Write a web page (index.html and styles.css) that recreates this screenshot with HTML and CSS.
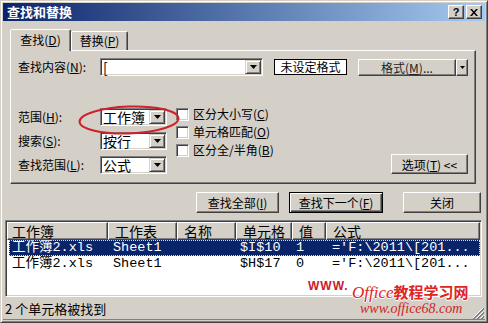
FILE: index.html
```html
<!DOCTYPE html>
<html lang="zh-CN">
<head>
<meta charset="utf-8">
<title>查找和替换</title>
<link rel="stylesheet" href="styles.css">
</head>
<body>
<div class="window">
  <div class="titlebar">
    <span class="title">查找和替换</span>
    <div class="tbtns">
      <span class="tbtn help">?</span>
      <span class="tbtn"><svg width="8" height="7" viewBox="0 0 8 7"><path d="M0 0h2l2 2.5L6 0h2L5 3.5 8 7H6L4 4.5 2 7H0l3-3.5z" fill="#000"/></svg></span>
    </div>
  </div>
  <div class="body">
    <div class="tabs">
      <div class="tab active t1">查找(<u>D</u>)</div>
      <div class="tab t2">替换(<u>P</u>)</div>
    </div>
    <div class="panel">
      <div class="row1">
        <span class="label">查找内容(<u>N</u>):</span>
        <div class="combo wide"><span class="val">[</span><span class="drop"><svg width="7" height="4" viewBox="0 0 7 4"><path d="M0 0h7L3.5 4z" fill="#000"/></svg></span></div>
        <div class="fmtbox">未设定格式</div>
        <div class="splitbtn"><span class="main">格式(<u>M</u>)...</span><span class="arr"><svg width="5" height="3" viewBox="0 0 5 3"><path d="M0 0h5L2.5 3z" fill="#000"/></svg></span></div>
      </div>
      <div class="opts">
        <div class="grid">
          <span class="label">范围(<u>H</u>):</span>
          <div class="combo"><span class="val">工作簿</span><span class="drop"><svg width="7" height="4" viewBox="0 0 7 4"><path d="M0 0h7L3.5 4z" fill="#000"/></svg></span></div>
          <span class="label">搜索(<u>S</u>):</span>
          <div class="combo"><span class="val">按行</span><span class="drop"><svg width="7" height="4" viewBox="0 0 7 4"><path d="M0 0h7L3.5 4z" fill="#000"/></svg></span></div>
          <span class="label">查找范围(<u>L</u>):</span>
          <div class="combo"><span class="val">公式</span><span class="drop"><svg width="7" height="4" viewBox="0 0 7 4"><path d="M0 0h7L3.5 4z" fill="#000"/></svg></span></div>
        </div>
        <div class="checks">
          <div class="chk"><span class="box"></span>区分大小写(<u>C</u>)</div>
          <div class="chk"><span class="box"></span>单元格匹配(<u>O</u>)</div>
          <div class="chk"><span class="box"></span>区分全/半角(<u>B</u>)</div>
        </div>
        <div class="btn optbtn">选项(<u>T</u>) &lt;&lt;</div>
      </div>
    </div>
    <div class="actions">
      <div class="btn b1">查找全部(<u>I</u>)</div>
      <div class="btn b2 default">查找下一个(<u>F</u>)</div>
      <div class="btn b3">关闭</div>
    </div>
    <div class="list">
      <div class="lhead">
        <span class="hc c1">工作簿</span>
        <span class="hc c2">工作表</span>
        <span class="hc c3">名称</span>
        <span class="hc c4">单元格</span>
        <span class="hc c5">值</span>
        <span class="hc c6">公式</span>
      </div>
      <div class="lrow sel">
        <span class="cell c1">工作簿2.xls</span>
        <span class="cell c2">Sheet1</span>
        <span class="cell c3"></span>
        <span class="cell c4">$I$10</span>
        <span class="cell c5">1</span>
        <span class="cell c6">='F:\2011\[201...</span>
      </div>
      <div class="lrow">
        <span class="cell c1">工作簿2.xls</span>
        <span class="cell c2">Sheet1</span>
        <span class="cell c3"></span>
        <span class="cell c4">$H$17</span>
        <span class="cell c5">0</span>
        <span class="cell c6">='F:\2011\[201...</span>
      </div>
    </div>
  </div>
  <div class="status">2 个单元格被找到</div>

  <svg class="ring" width="104" height="32" viewBox="0 0 104 32"><ellipse cx="52" cy="16" rx="49.5" ry="13.5" fill="none" stroke="#D0202A" stroke-width="2" transform="rotate(-2 52 16)"/></svg>

  <div class="wm">
    <span class="wm-www">WWW.</span>
    <span class="wm-brand"><i>Office</i>教程学习网</span>
    <span class="wm-url">www.office68.com</span>
  </div>
  <svg class="grip" width="12" height="12" viewBox="0 0 12 12">
    <path d="M11 1L1 11M11 5L5 11M11 9L9 11" stroke="#fff" stroke-width="1"/>
    <path d="M12 1L1 12M12 2L2 12M12 5L5 12M12 6L6 12M12 9L9 12M12 10L10 12" stroke="#808080" stroke-width="1"/>
  </svg>
</div>
</body>
</html>
```

FILE: styles.css
```css
* { box-sizing: border-box; }
html, body { margin: 0; padding: 0; }
body {
  width: 488px; height: 323px; overflow: hidden;
  background: #D4D0C8;
  font-family: "Noto Sans CJK SC", "DejaVu Sans", sans-serif;
  font-size: 12px; color: #000;
}
u { text-decoration: underline; text-underline-offset: 1px; }

.window {
  position: relative;
  width: 488px; height: 323px;
  background: #D4D0C8;
  border: 1px solid; border-color: #D4D0C8 #404040 #404040 #D4D0C8;
  box-shadow: inset 1px 1px #fff, inset -1px -1px #808080;
  padding: 2px;
  display: flex; flex-direction: column;
}

.titlebar {
  height: 18px; flex: none;
  display: flex; align-items: center;
  background: linear-gradient(90deg, #0A246A, #A6CAF0);
  padding: 0 3px 0 4px;
}
.title { color: #fff; font-weight: bold; font-size: 13px; line-height: 18px; }
.tbtns { margin-left: auto; display: flex; gap: 2px; }
.tbtn {
  width: 16px; height: 14px;
  display: flex; align-items: center; justify-content: center;
  background: #D4D0C8;
  border: 1px solid; border-color: #fff #404040 #404040 #fff;
  box-shadow: inset -1px -1px #808080;
}
.tbtn.help { font-family: "Liberation Sans", sans-serif; font-weight: bold; font-size: 11px; line-height: 12px; }

.body {
  flex: 1; display: flex; flex-direction: column;
  padding: 8px 3px 0 2px;
}

.tabs { height: 21px; display: flex; align-items: flex-end; margin-left: 5px; flex: none; }
.tab {
  height: 19px; text-align: center; line-height: 18px;
  border: 1px solid; border-bottom: none;
  border-color: #fff #404040 transparent #fff;
  box-shadow: inset -1px 0 #808080;
  border-radius: 2px 2px 0 0;
  background: #D4D0C8;
}
.tab.active { height: 22px; margin-bottom: -1px; position: relative; z-index: 1; line-height: 20px; }
.t1 { width: 61px; }
.t2 { width: 57px; }

.panel {
  height: 134px; flex: none;
  margin: 0 6px 0 5px;
  border: 1px solid; border-color: #fff #404040 #404040 #fff;
  box-shadow: inset -1px -1px #808080;
  padding: 7px 7px 0 7px;
}
.row1 { display: flex; align-items: center; height: 18px; }
.label { width: 82px; flex: none; white-space: nowrap; line-height: 18px; }

.combo {
  height: 18px; display: flex;
  background: #fff;
  border: 1px solid; border-color: #808080 #fff #fff #808080;
  box-shadow: inset 1px 1px #404040, inset -1px -1px #D4D0C8;
  padding: 1px;
}
.combo .val { flex: 1; min-width: 0; font-size: 14px; line-height: 14px; padding-left: 1px; white-space: nowrap; }
.combo .drop {
  width: 16px; height: 14px; flex: none;
  display: flex; align-items: center; justify-content: center;
  background: #D4D0C8;
  border: 1px solid; border-color: #D4D0C8 #404040 #404040 #D4D0C8;
  box-shadow: inset 1px 1px #fff, inset -1px -1px #808080;
}
.combo.wide { width: 163px; }
.grid .combo { width: 67px; }

.fmtbox {
  margin-left: 11px; width: 73px; height: 16px;
  border: 1px solid #000; background: #fff;
  text-align: center; line-height: 14px;
}
.splitbtn {
  margin-left: 11px; width: 110px; height: 17px;
  display: flex;
}
.splitbtn .main, .splitbtn .arr {
  border: 1px solid; border-color: #fff #404040 #404040 #fff;
  box-shadow: inset -1px -1px #808080;
  display: flex; align-items: center; justify-content: center;
}
.splitbtn .main { flex: 1; line-height: 15px; color: #222; }
.splitbtn .arr { width: 12px; flex: none; }

.opts { margin-top: 32px; height: 66px; display: flex; }
.grid { display: grid; grid-template-columns: 82px 67px; grid-auto-rows: 18px; row-gap: 6px; }
.grid .label { display: flex; align-items: center; }
.checks { margin-left: 9px; margin-top: -3px; display: flex; flex-direction: column; }
.chk { height: 18px; display: flex; align-items: center; white-space: nowrap; line-height: 18px; }
.box {
  width: 13px; height: 13px; margin-right: 4px; flex: none;
  background: #fff;
  border: 1px solid; border-color: #808080 #fff #fff #808080;
  box-shadow: inset 1px 1px #404040, inset -1px -1px #D4D0C8;
}

.btn {
  height: 21px;
  display: flex; align-items: center; justify-content: center;
  border: 1px solid; border-color: #fff #404040 #404040 #fff;
  box-shadow: inset -1px -1px #808080;
  white-space: nowrap;
}
.optbtn { margin-left: auto; align-self: flex-end; width: 77px; height: 20px; }

.actions { margin-top: 8px; height: 21px; display: flex; justify-content: flex-end; flex: none; }
.b1 { width: 83px; margin-right: 10px; }
.b2 { width: 94px; margin-right: 20px; }
.b3 { width: 78px; margin-right: 1px; }
.btn.default {
  border: 1px solid #000;
  box-shadow: inset 1px 1px #fff, inset -1px -1px #404040, inset -2px -2px #808080;
}

.list {
  margin-top: 7px; height: 77px; flex: none;
  background: #fff;
  border: 1px solid; border-color: #808080 #fff #fff #808080;
  box-shadow: inset 1px 1px #404040, inset -1px -1px #D4D0C8;
  padding: 1px;
  display: flex; flex-direction: column;
  overflow: hidden;
}
.lhead { height: 18px; display: flex; flex: none; background: #D4D0C8; }
.hc {
  height: 18px; font-size: 14px; line-height: 16px;
  padding-left: 4px; white-space: nowrap; overflow: hidden;
  border: 1px solid; border-color: #fff #404040 #404040 #fff;
  box-shadow: inset -1px -1px #808080;
}
.c1 { width: 101px; flex: none; }
.c2 { width: 69px; flex: none; }
.c3 { width: 59px; flex: none; }
.c4 { width: 56px; flex: none; }
.c5 { width: 34px; flex: none; }
.c6 { flex: 1; }
.hc.c2, .hc.c3, .hc.c4, .hc.c5, .hc.c6 { padding-left: 6px; }

.lrow {
  height: 16px; display: flex; margin-left: 2px;
  font-family: "Liberation Mono", "Noto Sans CJK SC", monospace;
  font-size: 13.5px; line-height: 16px; white-space: nowrap;
}
.lrow .c1 { width: 99px; }
.cell { padding-left: 3px; overflow: hidden; }
.cell.c2 { padding-left: 5px; }
.cell.c4, .cell.c5 { padding-left: 4px; }
.cell.c6 { padding-left: 6px; }
.lrow.sel { background: #0A246A; color: #fff; outline: 1px dotted #d8d8d8; outline-offset: -1px; }

.status {
  height: 23px; flex: none;
  font-size: 13px; line-height: 23px;
  padding-left: 2px;
  border-bottom: 1px solid #808080;
}

.ring { position: absolute; left: 76px; top: 103px; }

.wm { position: absolute; left: 300px; top: 276px; width: 185px; height: 44px; pointer-events: none; }
.wm span { position: absolute; white-space: nowrap; }
.wm-www { left: 7px; top: 2px; font-family: "Liberation Sans", sans-serif; font-weight: bold; font-size: 12px; letter-spacing: 1px; color: #C8202A; }
.wm-brand {
  left: 51px; top: 6px; font-size: 15px; font-weight: bold; color: #E0241E; line-height: 18px;
  text-shadow: 1px 0 #fff, -1px 0 #fff, 0 1px #fff, 0 -1px #fff;
}
.wm-brand i { font-family: "Liberation Serif", serif; font-size: 17px; font-weight: normal; }
.wm-url { left: 59px; top: 24px; font-family: "Liberation Serif", serif; font-style: italic; font-size: 14px; color: #D01E1E; line-height: 16px; }

.grip { position: absolute; right: 3px; bottom: 3px; }
```
